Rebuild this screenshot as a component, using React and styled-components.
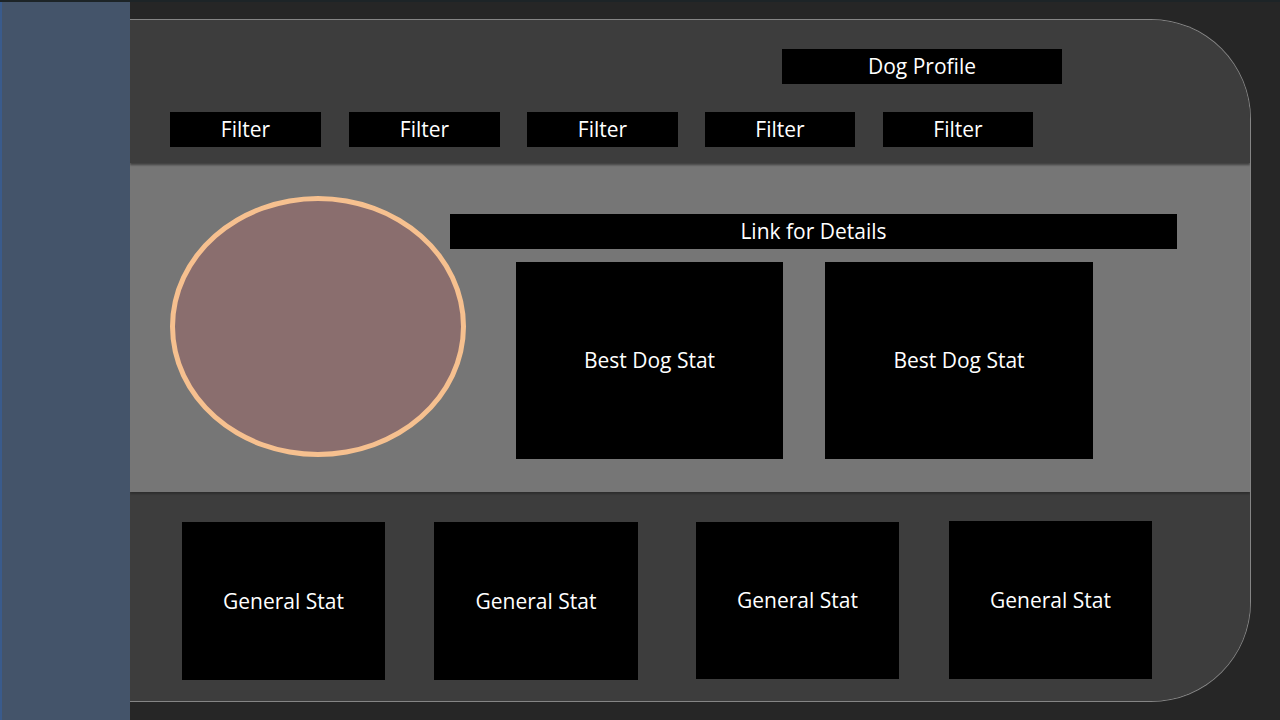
import React from 'react';
import styled, { createGlobalStyle } from 'styled-components';

const GlobalStyle = createGlobalStyle`
  html, body {
    margin: 0;
    padding: 0;
    background: #262626;
  }
  body {
    font-family: "Open Sans", Lato, sans-serif;
  }
`;

const Page = styled.div`
  display: flex;
  width: 1280px;
  height: 720px;
  overflow: hidden;
  background: #262626;
  border-top: 2px solid #1d2427;
  box-sizing: border-box;
`;

const Sidebar = styled.div`
  flex: none;
  width: 130px;
  margin-top: -2px;
  background: #44546a;
  border-left: 2px solid #3a5b8c;
  box-sizing: border-box;
`;

const Stage = styled.div`
  flex: none;
  padding: 17px 0 0 0;
`;

const Panel = styled.div`
  display: flex;
  flex-direction: column;
  width: 1121px;
  height: 683px;
  box-sizing: border-box;
  border: 1px solid #858585;
  border-left: none;
  border-radius: 0 100px 100px 0;
  overflow: hidden;
  background: #3d3d3d;
`;

const Header = styled.div`
  position: relative;
  z-index: 2;
  flex: none;
  height: 143px;
  box-sizing: border-box;
  padding: 29px 0 0 40px;
  background: #3d3d3d;
  box-shadow: 0 2px 2px rgba(0, 0, 0, 0.45);
`;

const Label = styled.div`
  display: flex;
  align-items: center;
  justify-content: center;
  flex: none;
  background: #000;
  color: #fff;
  font-size: 21px;
  line-height: 1;
  box-sizing: border-box;
  width: ${p => p.$w}px;
  height: ${p => p.$h || 35}px;
  margin-left: ${p => p.$ml || 0}px;
  margin-top: ${p => p.$mt || 0}px;
`;

const FilterRow = styled.div`
  display: flex;
  margin-top: 28px;
`;

const Middle = styled.div`
  position: relative;
  z-index: 1;
  flex: none;
  display: flex;
  align-items: flex-start;
  height: 329px;
  box-sizing: border-box;
  padding: 33px 0 0 40px;
  background: #767676;
  box-shadow: 0 2px 2px rgba(0, 0, 0, 0.25);
`;

const Portrait = styled.div`
  flex: none;
  width: 296px;
  height: 261px;
  box-sizing: border-box;
  border-radius: 50%;
  border: 5px solid #f6c08f;
  background: #8a6e6e;
`;

const DetailsColumn = styled.div`
  display: flex;
  flex-direction: column;
  margin-left: -16px;
  padding-top: 18px;
`;

const BestRow = styled.div`
  display: flex;
  gap: 42px;
  padding-left: 66px;
  margin-top: 13px;
`;

const Bottom = styled.div`
  flex: 1;
  display: flex;
  align-items: flex-start;
  padding: 30px 0 0 52px;
  background: #3d3d3d;
`;

const filters = [
  { ml: 0, w: 151 },
  { ml: 28, w: 151 },
  { ml: 27, w: 151 },
  { ml: 27, w: 150 },
  { ml: 28, w: 150 },
];

const generalStats = [
  { ml: 0, mt: 0, w: 203, h: 158 },
  { ml: 49, mt: 0, w: 204, h: 158 },
  { ml: 58, mt: 0, w: 203, h: 157 },
  { ml: 50, mt: -1, w: 203, h: 158 },
];

export default function App() {
  return (
    <>
      <GlobalStyle />
      <Page>
        <Sidebar />
        <Stage>
          <Panel>
            <Header>
              <Label $w={280} $ml={612}>Dog Profile</Label>
              <FilterRow>
                {filters.map((f, i) => (
                  <Label key={i} $w={f.w} $ml={f.ml}>Filter</Label>
                ))}
              </FilterRow>
            </Header>
            <Middle>
              <Portrait />
              <DetailsColumn>
                <Label $w={727}>Link for Details</Label>
                <BestRow>
                  <Label $w={267} $h={197}>Best Dog Stat</Label>
                  <Label $w={268} $h={197}>Best Dog Stat</Label>
                </BestRow>
              </DetailsColumn>
            </Middle>
            <Bottom>
              {generalStats.map((s, i) => (
                <Label key={i} $w={s.w} $h={s.h} $ml={s.ml} $mt={s.mt}>General Stat</Label>
              ))}
            </Bottom>
          </Panel>
        </Stage>
      </Page>
    </>
  );
}
